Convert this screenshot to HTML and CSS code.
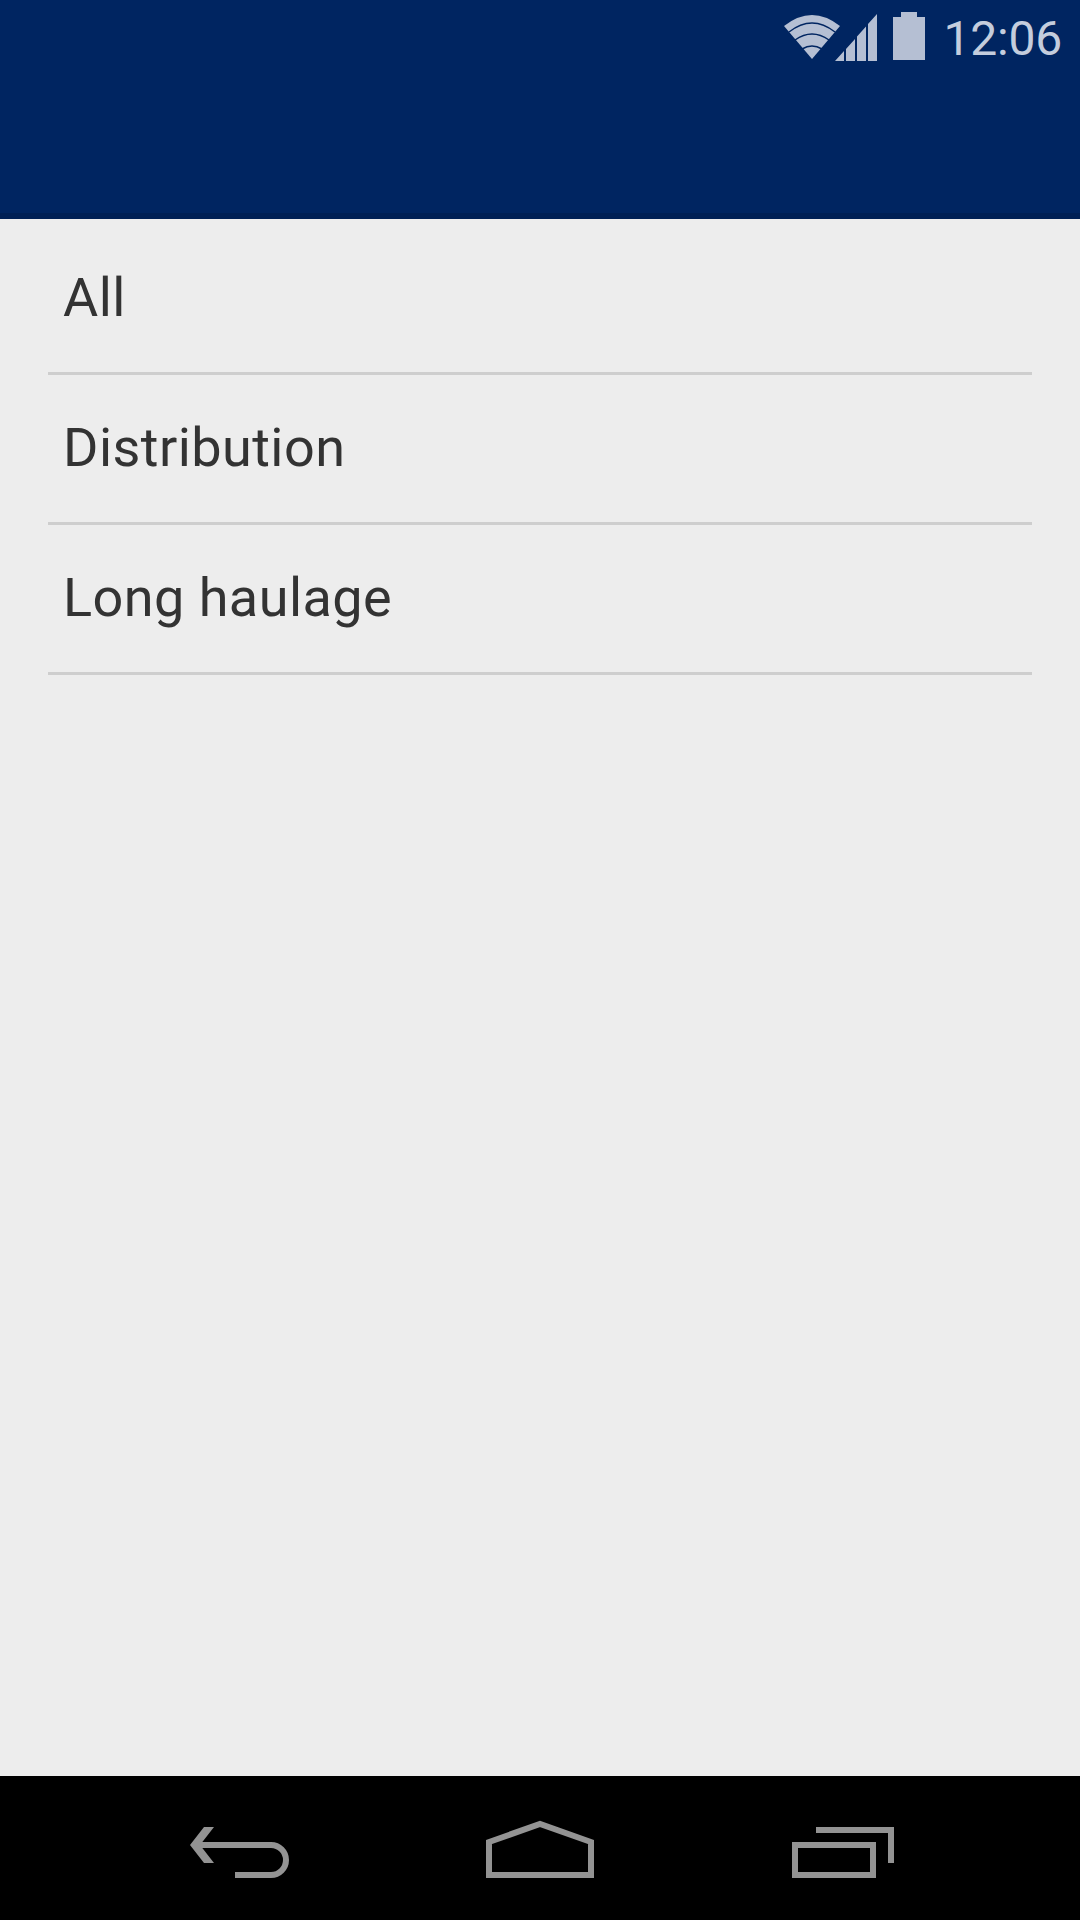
FILE: index.html
```html
<!DOCTYPE html>
<html lang="en">
<head>
  <meta charset="UTF-8">
  <meta name="viewport" content="width=device-width, initial-scale=1.0">
  <title>Categories</title>
  <link rel="stylesheet" href="styles.css">
</head>
<body>
  <header class="top-bar">
    <div class="status-bar">
      <svg class="icon-wifi" width="56" height="44" viewBox="0 0 56 44">
        <path fill="#b5bfd3" d="M0 11 Q28 -11 56 11 L28 44 Z"/>
        <path fill="none" stroke="#002561" stroke-width="1.500" d="M5 17 Q28 -1 51 17 M11 25 Q28 13 45 25 M18 34 Q28 28 38 34"/>
      </svg>
      <svg class="icon-signal" width="42" height="47" viewBox="0 0 42 47">
        <path fill="#b5bfd3" d="M0 47 L9 37 V47 Z M11 35 L20 25 V47 H11 Z M22 22.500 L31 12.500 V47 H22 Z M33 10 L42 0 V47 H33 Z"/>
      </svg>
      <svg class="icon-battery" width="32" height="48" viewBox="0 0 32 48">
        <path fill="#b5bfd3" d="M8 0 H24 V5 H32 V48 H0 V5 H8 Z"/>
      </svg>
      <span class="clock">12:06</span>
    </div>
  </header>

  <main class="category-list">
    <div class="category-item">All</div>
    <div class="category-item">Distribution</div>
    <div class="category-item">Long haulage</div>
  </main>

  <nav class="nav-bar">
    <svg class="nav-back" width="102" height="54" viewBox="0 0 102 54">
      <path fill="#939393" d="M1 21 L15 3 H25 L11 21 L25 39 H15 Z"/>
      <path fill="none" stroke="#939393" stroke-width="6" d="M6 21 H82 A15 15 0 0 1 82 51 H46"/>
    </svg>
    <svg class="nav-home" width="108" height="58" viewBox="0 0 108 58">
      <path fill="none" stroke="#939393" stroke-width="6" d="M3 55 V22 L54 4 L105 22 V55 Z"/>
    </svg>
    <svg class="nav-recent" width="102" height="52" viewBox="0 0 102 52">
      <path fill="none" stroke="#939393" stroke-width="6" d="M24 4 H99 V37"/>
      <rect x="3" y="19" width="78" height="30" fill="none" stroke="#939393" stroke-width="6"/>
    </svg>
  </nav>
</body>
</html>
```

FILE: styles.css
```css
body {
  background-color: #ededed;
  color: #333;
  font-family: Roboto, sans-serif;
  margin: 0;
  padding: 0;
  width: 1080px;
  height: 1920px;
  display: flex;
  flex-direction: column;
  overflow: hidden;
}
.top-bar {
  background-color: #002561;
  border-bottom: 6px solid #002055;
  height: 213px;
}
.status-bar {
  height: 74px;
  display: flex;
  justify-content: flex-end;
  align-items: center;
  padding-right: 18px;
}
.clock {
  color: #c4cddd;
  font-size: 48px;
  margin-left: 18px;
  padding-top: 2px;
  letter-spacing: -0.2px;
  line-height: 75px;
}
.icon-signal {
  margin-left: -5px;
}
.icon-battery {
  margin-left: 16px;
  margin-bottom: 2px;
}
.category-list {
  flex: 1;
  padding: 6px 48px 0;
}
.category-item {
  height: 147px;
  line-height: 146px;
  padding-left: 15px;
  font-size: 54px;
  letter-spacing: 0.45px;
  border-bottom: 3px solid #cecece;
}
.nav-bar {
  height: 144px;
  background-color: #000;
  display: flex;
  align-items: flex-end;
  padding-bottom: 42px;
  box-sizing: border-box;
}
.nav-back {
  margin-left: 189px;
}
.nav-home {
  margin-left: 195px;
}
.nav-recent {
  margin-left: 198px;
}
```
